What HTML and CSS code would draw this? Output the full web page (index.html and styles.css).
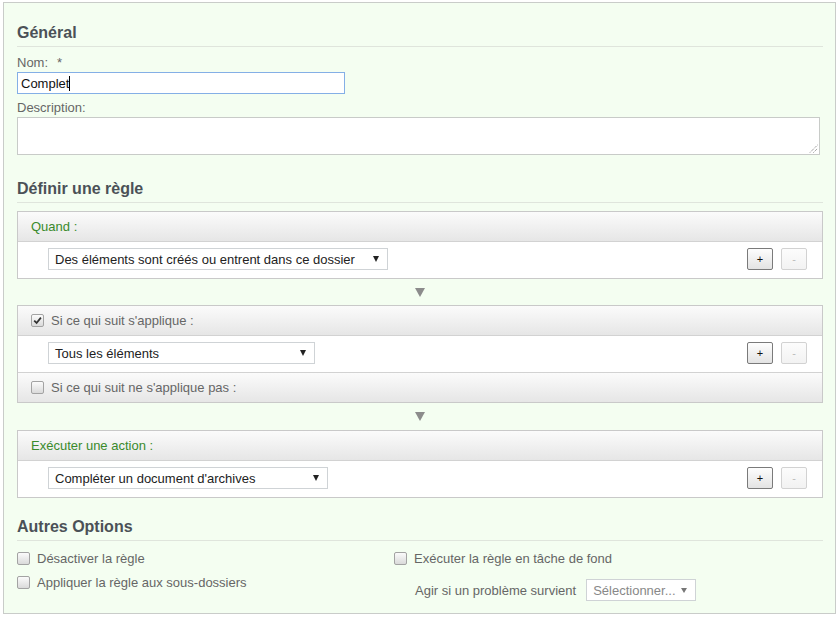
FILE: index.html
```html
<!DOCTYPE html>
<html lang="fr">
<head>
<meta charset="utf-8">
<title>Règle</title>
<link rel="stylesheet" href="styles.css">
</head>
<body>
<div class="frame">
  <h2 class="section-title">Général</h2>
  <div class="label label-first">Nom:<span class="req">*</span></div>
  <div class="input"><span>Complet</span><span class="caret"></span></div>
  <div class="label label-next">Description:</div>
  <div class="textarea">
    <svg class="grip" width="9" height="9" viewBox="0 0 9 9"><path d="M1 8.5 L8.5 1 M4.5 8.5 L8.5 4.5" stroke="#777" stroke-width="1" stroke-dasharray="1 1" fill="none"/></svg>
  </div>

  <h2 class="section-title spaced">Définir une règle</h2>

  <div class="panel">
    <div class="panel-head"><span class="green">Quand :</span></div>
    <div class="panel-row">
      <div class="select w-quand"><span>Des éléments sont créés ou entrent dans ce dossier</span><span class="tri"></span></div>
      <div class="btns"><span class="btn">+</span><span class="btn disabled">-</span></div>
    </div>
  </div>

  <div class="arrow"></div>

  <div class="panel">
    <div class="panel-head"><span class="cb checked"><svg width="9" height="9" viewBox="0 0 9 9"><path d="M1.2 4.6 L3.6 7 L7.9 1.6" stroke="#333" stroke-width="1.8" fill="none"/></svg></span><span class="gray">Si ce qui suit s'applique :</span></div>
    <div class="panel-row">
      <div class="select w-si"><span>Tous les éléments</span><span class="tri"></span></div>
      <div class="btns"><span class="btn">+</span><span class="btn disabled">-</span></div>
    </div>
    <div class="panel-head top-line"><span class="cb"></span><span class="gray">Si ce qui suit ne s'applique pas :</span></div>
  </div>

  <div class="arrow arrow-tall"></div>

  <div class="panel">
    <div class="panel-head"><span class="green">Exécuter une action :</span></div>
    <div class="panel-row">
      <div class="select w-exec"><span>Compléter un document d'archives</span><span class="tri"></span></div>
      <div class="btns"><span class="btn">+</span><span class="btn disabled">-</span></div>
    </div>
  </div>

  <h2 class="section-title spaced-small">Autres Options</h2>

  <div class="options">
    <div class="col">
      <div class="opt"><span class="cb"></span>Désactiver la règle</div>
      <div class="opt"><span class="cb"></span>Appliquer la règle aux sous-dossiers</div>
    </div>
    <div class="col">
      <div class="opt"><span class="cb"></span>Exécuter la règle en tâche de fond</div>
      <div class="agir">Agir si un problème survient
        <div class="select small"><span>Sélectionner...</span><span class="tri light"></span></div>
      </div>
    </div>
  </div>
</div>
</body>
</html>
```

FILE: styles.css
```css
* { box-sizing: border-box; }

body {
  margin: 0;
  background: #ffffff;
  font-family: "Liberation Sans", Arial, sans-serif;
  font-size: 13px;
  color: #333;
}

.frame {
  margin: 2px 0 0 3px;
  width: 833px;
  height: 612px;
  border: 1px solid #c9ccc9;
  background: #f4fef1;
  padding: 21px 12px 0 13px;
}

.section-title {
  margin: 0;
  font-size: 16px;
  line-height: 17px;
  font-weight: bold;
  color: #4b5157;
  padding-bottom: 5px;
  border-bottom: 1px solid #dfe5dc;
}

.section-title.spaced { margin-top: 25px; margin-bottom: 8px; }
.section-title.spaced-small { margin-top: 20px; }

.label {
  color: #666;
  line-height: 15px;
  margin-bottom: 2px;
}
.label-first { margin-top: 8px; }
.label-next { margin-top: 6px; }
.req { margin-left: 9px; }

.input {
  width: 328px;
  height: 22px;
  border: 1px solid #84afe6;
  background: #fff;
  display: flex;
  align-items: center;
  padding-left: 3px;
  color: #111;
}
.caret {
  width: 1px;
  height: 15px;
  background: #000;
}

.textarea {
  position: relative;
  width: 803px;
  height: 38px;
  border: 1px solid #c8cbc8;
  background: #fff;
}
.grip {
  position: absolute;
  right: 1px;
  bottom: 1px;
}

.panel {
  border: 1px solid #c9c9c9;
  background: #fff;
}

.panel-head {
  height: 30px;
  display: flex;
  align-items: center;
  padding: 0 13px;
  background: linear-gradient(#fbfbfb, #e6e6e6);
  border-bottom: 1px solid #d2d2d2;
}
.panel-head.top-line {
  border-bottom: none;
  border-top: 1px solid #d2d2d2;
  height: 30px;
}
.panel-row + .panel-head.top-line { margin-top: 0; }

.green { color: #3a8a2c; }
.gray { color: #666; }

.panel-row {
  height: 36px;
  display: flex;
  align-items: flex-start;
  padding: 6px 15px 0 30px;
  background: #fff;
}

.select {
  height: 22px;
  border: 1px solid #cfd3d6;
  background: #fff;
  display: flex;
  align-items: center;
  padding: 0 8px 0 6px;
  color: #222;
}
.select span:first-child { flex: 1; }
.w-quand { width: 340px; }
.w-si { width: 267px; }
.w-exec { width: 280px; }

.tri {
  width: 0;
  height: 0;
  border-left: 3px solid transparent;
  border-right: 3px solid transparent;
  border-top: 6px solid #222;
}
.tri.light {
  border-left-width: 3px;
  border-right-width: 3px;
  border-top: 5px solid #777;
}

.btns {
  margin-left: auto;
  display: flex;
  gap: 8px;
}
.btn {
  width: 26px;
  height: 22px;
  border: 1px solid #7a7a7a;
  border-radius: 2px;
  background: linear-gradient(#fdfdfd, #e3e3e3);
  display: flex;
  align-items: center;
  justify-content: center;
  font-size: 11px;
  color: #111;
}
.btn.disabled {
  border-color: #d2d2d2;
  background: linear-gradient(#fcfcfc, #f2f2f2);
  color: #bbb;
}

.cb {
  flex: none;
  width: 13px;
  height: 13px;
  border: 1px solid #a3a3a3;
  border-radius: 2px;
  background: linear-gradient(#fbfbfb, #dadada);
  margin-right: 7px;
  display: flex;
  align-items: center;
  justify-content: center;
}

.arrow {
  height: 26px;
  display: flex;
  justify-content: center;
  align-items: center;
}
.arrow::before {
  content: "";
  border-left: 5px solid transparent;
  border-right: 5px solid transparent;
  border-top: 9px solid #8c8c8c;
}
.arrow-tall { height: 27px; }

.options {
  display: grid;
  grid-template-columns: 377px 1fr;
  margin-top: 8px;
  color: #666;
}

.opt {
  display: flex;
  align-items: center;
  height: 18px;
}
.opt + .opt { margin-top: 6px; }

.agir {
  display: flex;
  align-items: center;
  margin-top: 12px;
  padding-left: 21px;
}
.select.small {
  width: 110px;
  margin-left: 10px;
  color: #888;
}
```
